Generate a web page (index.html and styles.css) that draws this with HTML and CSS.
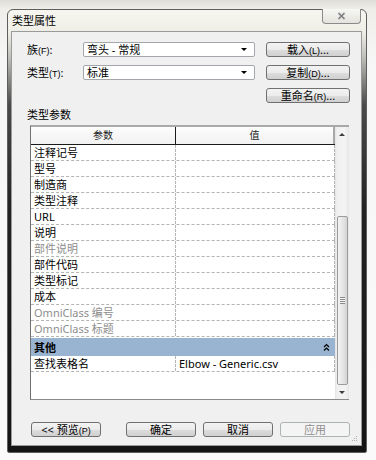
FILE: index.html
```html
<!DOCTYPE html>
<html>
<head>
    <title>类型属性</title>
    <link rel="stylesheet" href="styles.css">
</head>
<body>
    <div class="desk">
        <div class="window">
            <div class="titlebar">
                <span class="title">类型属性</span>
                <button class="close-btn">
                    <svg width="9" height="8" viewBox="0 0 9 8">
                        <path d="M1.5 1 L7.5 7 M7.5 1 L1.5 7" stroke="#d6d6d6" stroke-width="2.6"/>
                        <path d="M1.5 1 L7.5 7 M7.5 1 L1.5 7" stroke="#777" stroke-width="1.1"/>
                    </svg>
                </button>
            </div>

            <div class="client">
                <div class="pickers">
                    <span class="label">族<span class="key">(F)</span>:</span>
                    <div class="combo"><span>弯头 - 常规</span><i class="arrow"></i></div>
                    <button class="btn">载入<span class="key">(L)</span>...</button>

                    <span class="label">类型<span class="key">(T)</span>:</span>
                    <div class="combo"><span>标准</span><i class="arrow"></i></div>
                    <button class="btn">复制<span class="key">(D)</span>...</button>

                    <span></span>
                    <span></span>
                    <button class="btn">重命名<span class="key">(R)</span>...</button>
                </div>

                <div class="section-label">类型参数</div>

                <div class="grid-box">
                    <div class="grid">
                        <div class="grid-head">
                            <div class="head-a">参数</div>
                            <div class="head-b">值</div>
                        </div>
                        <div class="row"><div class="cell-a">注释记号</div><div class="cell-b"></div></div>
                        <div class="row"><div class="cell-a">型号</div><div class="cell-b"></div></div>
                        <div class="row"><div class="cell-a">制造商</div><div class="cell-b"></div></div>
                        <div class="row"><div class="cell-a">类型注释</div><div class="cell-b"></div></div>
                        <div class="row"><div class="cell-a">URL</div><div class="cell-b"></div></div>
                        <div class="row"><div class="cell-a">说明</div><div class="cell-b"></div></div>
                        <div class="row muted"><div class="cell-a">部件说明</div><div class="cell-b"></div></div>
                        <div class="row"><div class="cell-a">部件代码</div><div class="cell-b"></div></div>
                        <div class="row"><div class="cell-a">类型标记</div><div class="cell-b"></div></div>
                        <div class="row"><div class="cell-a">成本</div><div class="cell-b"></div></div>
                        <div class="row muted"><div class="cell-a">OmniClass 编号</div><div class="cell-b"></div></div>
                        <div class="row muted"><div class="cell-a">OmniClass 标题</div><div class="cell-b"></div></div>
                        <div class="group">
                            <span>其他</span>
                            <svg width="7" height="8" viewBox="0 0 7 8">
                                <path d="M1 4 L3.5 1.5 L6 4 M1 7.5 L3.5 5 L6 7.5" fill="none" stroke="#000" stroke-width="1.2"/>
                            </svg>
                        </div>
                        <div class="row"><div class="cell-a">查找表格名</div><div class="cell-b">Elbow - Generic.csv</div></div>
                    </div>

                    <div class="scrollbar">
                        <div class="sb-arrow"><i class="tri-up"></i></div>
                        <div class="sb-track">
                            <div class="sb-thumb"><i class="grip"></i></div>
                        </div>
                        <div class="sb-arrow"><i class="tri-down"></i></div>
                    </div>
                </div>

                <div class="footer">
                    <button class="btn wide">&lt;&lt; 预览<span class="key">(P)</span></button>
                    <button class="btn">确定</button>
                    <button class="btn">取消</button>
                    <button class="btn" disabled>应用</button>
                </div>

                <svg class="size-grip" width="7" height="7" viewBox="0 0 7 7">
                    <rect x="5" y="1" width="1" height="1" fill="#b0b0b0"/>
                    <rect x="3" y="3" width="1" height="1" fill="#b0b0b0"/>
                    <rect x="5" y="3" width="1" height="1" fill="#b0b0b0"/>
                    <rect x="1" y="5" width="1" height="1" fill="#b0b0b0"/>
                    <rect x="3" y="5" width="1" height="1" fill="#b0b0b0"/>
                    <rect x="5" y="5" width="1" height="1" fill="#b0b0b0"/>
                </svg>
            </div>
        </div>
    </div>
</body>
</html>
```

FILE: styles.css
```css
body {
  margin: 0;
  padding: 0;
  font-family: "Noto Sans", "Noto Sans CJK SC", sans-serif;
  font-size: 11px;
  color: #000;
  background: #f4f4f4;
  overflow: hidden;
}

.desk {
  width: 376px;
  height: 460px;
  box-sizing: border-box;
  padding: 9px 0 0 7px;
  background: linear-gradient(to bottom, #deddd6 0, #efeee9 9px, #f6f6f6 60px, #fafafa 100%);
}

/* aero style frame */
.window {
  width: 360px;
  height: 444px;
  box-sizing: border-box;
  border: 1px solid #5e5e5e;
  border-radius: 6px 6px 2px 2px;
  padding: 0 4px 6px 3px;
  display: flex;
  flex-direction: column;
  background: linear-gradient(to bottom, #f6f5ef 0, #efeee6 22px, #c4c4bf 45px, #4a4a4a 95px, #222 200px, #141414 100%);
}

.titlebar {
  height: 21px;
  display: flex;
  justify-content: space-between;
  align-items: flex-start;
}

.title {
  padding: 4px 0 0 1px;
  line-height: 13px;
  font-size: 11px;
}

.close-btn {
  width: 39px;
  height: 15px;
  margin: -1px 1px 0 0;
  padding: 0;
  border: 1px solid #8a8a8a;
  border-top: none;
  border-radius: 0 0 4px 4px;
  background: linear-gradient(to bottom, #f7f7f4, #e4e3dd);
  display: flex;
  align-items: center;
  justify-content: center;
}

.client {
  position: relative;
  width: 351px;
  height: 415px;
  box-sizing: border-box;
  border: 1px solid #9a9a9a;
  background: #f0f0f0;
  display: flex;
  flex-direction: column;
}

.pickers {
  display: grid;
  grid-template-columns: 56px 172px 95px;
  grid-auto-rows: 15px;
  row-gap: 8px;
  padding: 10px 0 0 15px;
}

.label {
  line-height: 15px;
}

.key {
  font-family: "Liberation Sans", sans-serif;
  font-size: 9px;
}

.combo {
  display: flex;
  justify-content: space-between;
  align-items: center;
  box-sizing: border-box;
  border: 1px solid #a3a6ab;
  border-radius: 2px;
  background: #fff;
  padding: 0 7px 0 3px;
  line-height: 13px;
}

.arrow {
  width: 0;
  height: 0;
  border-left: 3px solid transparent;
  border-right: 3px solid transparent;
  border-top: 3px solid #000;
}

.btn {
  width: 84px;
  height: 15px;
  justify-self: end;
  box-sizing: border-box;
  padding: 0;
  border: 1px solid #707070;
  border-radius: 3px;
  background: linear-gradient(to bottom, #f3f3f3 0%, #ebebeb 50%, #dddddd 51%, #d0d0d0 100%);
  font-family: inherit;
  font-size: 11px;
  line-height: 13px;
  color: #000;
}

.btn:disabled {
  border-color: #adb2b5;
  background: #f4f4f4;
  color: #8f8f8f;
}

.section-label {
  padding: 5px 0 3px 15px;
  line-height: 14px;
}

.grid-box {
  margin-left: 18px;
  width: 319px;
  height: 275px;
  box-sizing: border-box;
  border-top: 2px solid #a9a9a9;
  border-left: 1px solid #707070;
  border-bottom: 1px solid #8a8a8a;
  display: flex;
}

.grid {
  width: 304px;
  background: #fff;
  display: flex;
  flex-direction: column;
}

.grid-head {
  height: 18px;
  box-sizing: border-box;
  display: flex;
  border-bottom: 1px solid #1a1a1a;
  background: linear-gradient(to bottom, #fdfdfd, #f1f1f1);
  font-size: 10px;
  line-height: 17px;
  color: #222;
}

.head-a {
  width: 145px;
  box-sizing: border-box;
  border-right: 1px solid #1a1a1a;
  text-align: center;
}

.head-b {
  flex: 1;
  border-right: 2px solid #a9a9a9;
  text-align: center;
}

.row {
  height: 16px;
  box-sizing: border-box;
  display: flex;
  border-bottom: 1px dashed #b4b4b4;
  line-height: 15px;
}

.muted {
  color: #8d8d8d;
}

.cell-a {
  width: 145px;
  box-sizing: border-box;
  padding-left: 3px;
  border-right: 1px dashed #b4b4b4;
}

.cell-b {
  flex: 1;
  padding-left: 3px;
  border-right: 1px dashed #b4b4b4;
}

.group {
  height: 18px;
  margin-top: 1px;
  display: flex;
  justify-content: space-between;
  align-items: center;
  padding: 0 5px 0 3px;
  background: #99b4d1;
  font-weight: bold;
}

.scrollbar {
  width: 14px;
  display: flex;
  flex-direction: column;
  background: linear-gradient(to right, #e2e2e2 0, #f0f0f0 2px, #f4f4f4 10px, #e6e6e6 100%);
}

.sb-arrow {
  height: 14px;
  display: flex;
  align-items: center;
  justify-content: center;
}

.tri-up,
.tri-down {
  width: 0;
  height: 0;
  border-left: 3px solid transparent;
  border-right: 3px solid transparent;
}

.tri-up {
  border-bottom: 3px solid #3c3c3c;
}

.tri-down {
  border-top: 3px solid #3c3c3c;
}

.sb-track {
  flex: 1;
}

.sb-thumb {
  width: 11px;
  height: 169px;
  margin: 75px 0 0 2px;
  box-sizing: border-box;
  border: 1px solid #9b9b9b;
  border-radius: 2px;
  background: linear-gradient(to right, #f4f4f4, #e3e3e3 60%, #d4d4d4);
  display: flex;
  align-items: center;
  justify-content: center;
}

.grip {
  width: 5px;
  height: 7px;
  background: repeating-linear-gradient(to bottom, #8a8a8a 0 1px, #f6f6f6 1px 2px);
}

.footer {
  display: flex;
  margin-top: 22px;
  padding-left: 19px;
  gap: 7px;
}

.footer .btn {
  width: 70px;
}

.footer .wide {
  margin-right: 18px;
}

.size-grip {
  position: absolute;
  right: 3px;
  bottom: 3px;
}
```
